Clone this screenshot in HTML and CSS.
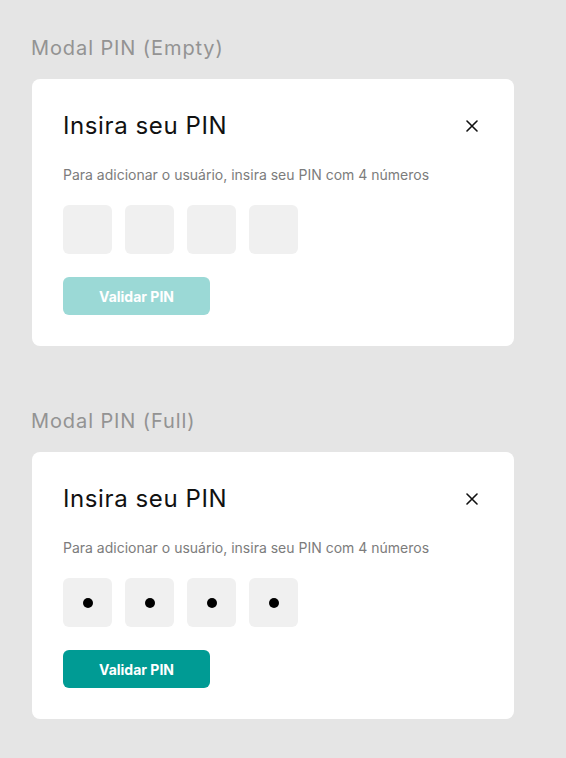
FILE: index.html
```html
<!DOCTYPE html>
<html lang="pt-BR">
<head>
    <meta charset="UTF-8">
    <meta name="viewport" content="width=device-width, initial-scale=1.0">
    <title>Modal PIN</title>
    <link rel="stylesheet" href="styles.css">
</head>
<body>
    <div class="page">
        <!-- Estado vazio -->
        <section class="variant">
            <h2 class="variant-label">Modal PIN (Empty)</h2>
            <div class="modal">
                <div class="modal-header">
                    <h1 class="modal-title">Insira seu PIN</h1>
                    <button class="close-btn" aria-label="Fechar">
                        <svg width="12" height="12" viewBox="0 0 12 12">
                            <path d="M1 1L11 11M11 1L1 11" stroke="#111" stroke-width="1.6" stroke-linecap="round"/>
                        </svg>
                    </button>
                </div>
                <p class="modal-text">Para adicionar o usuário, insira seu PIN com 4 números</p>
                <div class="pin-row">
                    <div class="pin-box"></div>
                    <div class="pin-box"></div>
                    <div class="pin-box"></div>
                    <div class="pin-box"></div>
                </div>
                <button class="validate-btn disabled">Validar PIN</button>
            </div>
        </section>

        <!-- Estado preenchido -->
        <section class="variant">
            <h2 class="variant-label">Modal PIN (Full)</h2>
            <div class="modal">
                <div class="modal-header">
                    <h1 class="modal-title">Insira seu PIN</h1>
                    <button class="close-btn" aria-label="Fechar">
                        <svg width="12" height="12" viewBox="0 0 12 12">
                            <path d="M1 1L11 11M11 1L1 11" stroke="#111" stroke-width="1.6" stroke-linecap="round"/>
                        </svg>
                    </button>
                </div>
                <p class="modal-text">Para adicionar o usuário, insira seu PIN com 4 números</p>
                <div class="pin-row">
                    <div class="pin-box"><span class="dot"></span></div>
                    <div class="pin-box"><span class="dot"></span></div>
                    <div class="pin-box"><span class="dot"></span></div>
                    <div class="pin-box"><span class="dot"></span></div>
                </div>
                <button class="validate-btn">Validar PIN</button>
            </div>
        </section>
    </div>
</body>
</html>
```

FILE: styles.css
```css
body {
    font-family: Inter, "Noto Sans", Arial, sans-serif;
    background-color: #e5e5e5;
    margin: 0;
    padding: 0;
}

.page {
    padding: 36px 0 0 32px;
    display: flex;
    flex-direction: column;
    gap: 63px;
}

.variant-label {
    margin: 0 0 19px -1px;
    font-size: 20px;
    line-height: 24px;
    font-weight: 400;
    letter-spacing: 0.9px;
    color: #939393;
}

/* Card do modal */
.modal {
    width: 482px;
    box-sizing: border-box;
    background-color: #fff;
    border-radius: 8px;
    padding: 32px 30px 31px 31px;
}

.modal-header {
    display: flex;
    align-items: center;
    justify-content: space-between;
}

.modal-title {
    margin: 0;
    font-size: 24px;
    line-height: 30px;
    font-weight: 400;
    letter-spacing: 0.6px;
    color: #111;
}

.close-btn {
    width: 24px;
    height: 24px;
    padding: 0;
    border: none;
    background: none;
    display: flex;
    align-items: center;
    justify-content: center;
    cursor: pointer;
}

.modal-text {
    margin: 24px 0 20px;
    font-size: 14px;
    line-height: 20px;
    color: #7c7c7c;
}

.pin-row {
    display: flex;
    gap: 13px;
}

.pin-box {
    width: 49px;
    height: 49px;
    border-radius: 6px;
    background-color: #f0f0f0;
    display: flex;
    align-items: center;
    justify-content: center;
}

.dot {
    width: 10px;
    height: 10px;
    border-radius: 50%;
    background-color: #000;
}

.validate-btn {
    margin-top: 23px;
    width: 147px;
    height: 38px;
    border: none;
    border-radius: 6px;
    background-color: #009b94;
    color: #fff;
    font-family: inherit;
    font-size: 14px;
    font-weight: 700;
    cursor: pointer;
    display: block;
}

.validate-btn.disabled {
    background-color: #9bd9d6;
    cursor: default;
}
```
